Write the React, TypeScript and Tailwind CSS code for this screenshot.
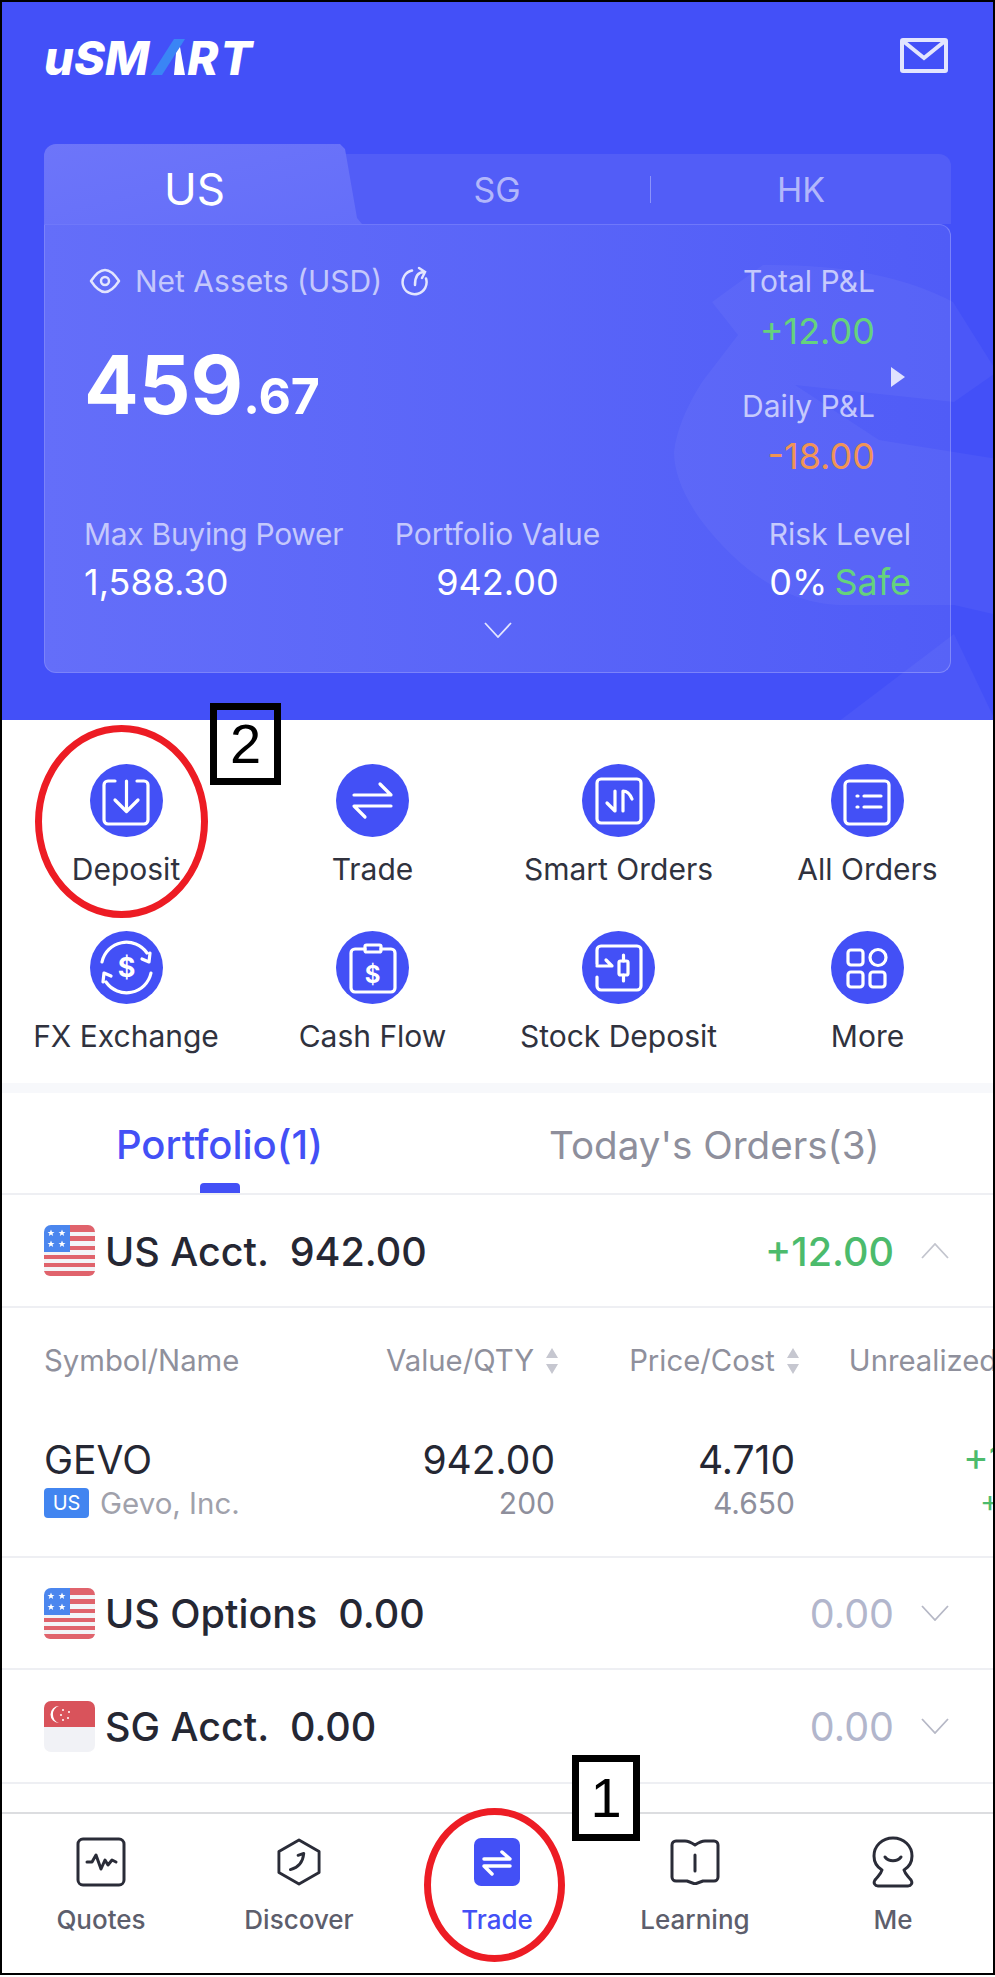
import type { ReactNode } from 'react';

const actions = [
  { label: 'Deposit', icon: <DepositIcon /> },
  { label: 'Trade', icon: <SwapIcon /> },
  { label: 'Smart Orders', icon: <SmartIcon /> },
  { label: 'All Orders', icon: <ListIcon /> },
  { label: 'FX Exchange', icon: <FxIcon /> },
  { label: 'Cash Flow', icon: <CashIcon /> },
  { label: 'Stock Deposit', icon: <StockIcon /> },
  { label: 'More', icon: <MoreIcon /> },
];

function Circle({ children }: { children: ReactNode }) {
  return (
    <svg viewBox="0 0 73 73" className="w-[73px] h-[73px]" fill="none" stroke="#fff" strokeWidth="3.200" strokeLinecap="round" strokeLinejoin="round">
      <circle cx="36.5" cy="36.5" r="36.5" fill="#4350f6" stroke="none" />
      {children}
    </svg>
  );
}

function DepositIcon() {
  return (
    <Circle>
      <path d="M25 17h-7a4 4 0 0 0-4 4v35a4 4 0 0 0 4 4h36a4 4 0 0 0 4-4V21a4 4 0 0 0-4-4h-7" />
      <path d="M36.5 17v30M25 36l11.500 11.500L48 36" />
    </Circle>
  );
}

function SwapIcon() {
  return (
    <Circle>
      <path d="M18 31h37L44 20M55 42H18l11 11" />
    </Circle>
  );
}

function SmartIcon() {
  return (
    <Circle>
      <rect x="15" y="15" width="44" height="44" rx="4" />
      <path d="M33 27v20l-8-8M41 47V27c4 0 7 3 9 8" />
    </Circle>
  );
}

function ListIcon() {
  return (
    <Circle>
      <rect x="14" y="17" width="44" height="43" rx="4" />
      <path d="M33 32h17M33 43h17M26 32h1M26 43h1" />
    </Circle>
  );
}

function FxIcon() {
  return (
    <Circle>
      <path d="M12 31a25 25 0 0 1 45-9M60 22l-1 9-7-3M61 42a25 25 0 0 1-45 9M13 51l1-9 7 3" />
      <text x="36.500" y="46" textAnchor="middle" fontSize="27" fontWeight="700" fill="#fff" stroke="none" fontFamily="Inter, sans-serif">$</text>
    </Circle>
  );
}

function CashIcon() {
  return (
    <Circle>
      <path d="M29 18h-10a4 4 0 0 0-4 4v35a4 4 0 0 0 4 4h36a4 4 0 0 0 4-4V22a4 4 0 0 0-4-4H45" />
      <rect x="29" y="14" width="16" height="7" rx="1.500" />
      <text x="36.500" y="52" textAnchor="middle" fontSize="24" fontWeight="700" fill="#fff" stroke="none" fontFamily="Inter, sans-serif">$</text>
    </Circle>
  );
}

function StockIcon() {
  return (
    <Circle>
      <path d="M15 33V19a4 4 0 0 1 4-4h36a4 4 0 0 1 4 4v36a4 4 0 0 1-4 4H19a4 4 0 0 1-4-4v-9" />
      <path d="M15 35h15l-6-6" />
      <rect x="37" y="30" width="9" height="14" rx="1.500" />
      <path d="M41.500 24v6M41.500 44v6" />
    </Circle>
  );
}

function MoreIcon() {
  return (
    <Circle>
      <rect x="17" y="19" width="15" height="15" rx="3" />
      <circle cx="47" cy="26.500" r="8" />
      <rect x="17" y="41" width="15" height="15" rx="3" />
      <rect x="39" y="41" width="15" height="15" rx="3" />
    </Circle>
  );
}

function Star({ x, y }: { x: number; y: number }) {
  return (
    <path
      transform={`translate(${x} ${y})`}
      d="M0-3.600 1 -1.100 3.500-1.100 1.500 .5 2.200 3 0 1.500-2.200 3-1.500 .5-3.500-1.100-1-1.100Z"
      fill="#fff"
    />
  );
}

function UsFlag() {
  return (
    <svg viewBox="0 0 51 51" className="w-[51px] h-[51px] shrink-0">
      <rect width="51" height="51" rx="7" fill="#f3f4f7" />
      <g fill="#e0636c">
        <path d="M26 0h18a7 7 0 0 1 7 7v0H26Z" />
        <rect x="26" y="11" width="25" height="5" />
        <rect x="26" y="21" width="25" height="4" />
        <rect y="30" width="51" height="4" />
        <rect y="38" width="51" height="4" />
        <path d="M0 46h51a7 7 0 0 1-7 5H7a7 7 0 0 1-7-5Z" />
      </g>
      <path d="M7 0h19v27H0V7a7 7 0 0 1 7-7Z" fill="#4b86ee" />
      <Star x={7} y={8} />
      <Star x={18} y={8} />
      <Star x={7} y={19} />
      <Star x={18} y={19} />
    </svg>
  );
}

function SgFlag() {
  return (
    <svg viewBox="0 0 51 51" className="w-[51px] h-[51px] shrink-0">
      <rect width="51" height="51" rx="7" fill="#f1f2f6" />
      <path d="M7 0h37a7 7 0 0 1 7 7v19H0V7a7 7 0 0 1 7-7Z" fill="#d9535b" />
      <path d="M15 5a9 9 0 0 0 0 17 8 8 0 0 1 0-17Z" fill="#fff" />
      <g fill="#fff">
        <circle cx="19" cy="9" r="1" />
        <circle cx="25" cy="11" r="1" />
        <circle cx="17" cy="14" r="1" />
        <circle cx="24" cy="17" r="1" />
        <circle cx="19" cy="19" r="1" />
      </g>
    </svg>
  );
}

function Chevron({ up, stroke }: { up?: boolean; stroke: string }) {
  return (
    <svg viewBox="0 0 28 16" className="w-[28px] h-[16px] shrink-0" fill="none" stroke={stroke} strokeWidth="1.800">
      <path d={up ? 'M1 15 14 1l13 14' : 'M1 1l13 14L27 1'} />
    </svg>
  );
}

function Sort() {
  return (
    <svg viewBox="0 0 12 26" className="w-[12px] h-[26px] ml-[12px] shrink-0" fill="#c6c7d0">
      <path d="M6 0l6 10H0ZM6 26l6-10H0Z" />
    </svg>
  );
}

function Account({ flag, name, total, pnl, open, line }: { flag: ReactNode; name: string; total: string; pnl: string; open?: boolean; line: string }) {
  return (
    <div className={`flex items-center shrink-0 pl-[42px] pr-[44px] border-b-2 border-[#eeeff3] ${line}`}>
      {flag}
      <span className="ml-[10px] mt-[4px] text-[39.5px] font-medium text-[#252733] whitespace-pre">{name}  {total}</span>
      <span className={`ml-auto mr-[27px] mt-[4px] text-[39.5px] ${open ? 'text-[#4cbb6c] font-medium' : 'text-[#b2b6cc]'}`}>{pnl}</span>
      <Chevron up={open} stroke={open ? '#c3c5ce' : '#b6b8c6'} />
    </div>
  );
}

const navIcon = { fill: 'none', stroke: '#2a2c38', strokeWidth: 3, strokeLinecap: 'round', strokeLinejoin: 'round' } as const;

function NavItem({ label, active, children }: { label: string; active?: boolean; children: ReactNode }) {
  return (
    <div className="w-[198px] flex flex-col items-center">
      <div className="h-[52px] flex items-center justify-center">{children}</div>
      <span className={`mt-[17px] text-[26px] font-medium leading-[30px] ${active ? 'text-[#4350f6]' : 'text-[#5d5e6c]'}`}>{label}</span>
    </div>
  );
}

export default function App() {
  return (
    <div className="relative w-[995px] h-[1977px] bg-white overflow-hidden font-['Inter',sans-serif]">
      <div className="h-[1975px] border-2 border-black flex flex-col overflow-hidden">
        {/* blue header */}
        <header className="relative h-[718px] shrink-0 bg-[#4350f8] overflow-hidden">
          <div className="flex items-start justify-between pl-[42px] pr-[45px] pt-[36px] h-[142px]">
            <div className="flex items-center h-[38px] text-white italic font-extrabold text-[47px] leading-none">
              <span>uSM</span>
              <svg viewBox="0 0 36 36" className="w-[36px] h-[36px] mx-[1px]">
                <path d="M1 36 24 0h11L12 36Z" fill="#3a85f5" />
                <path d="M26 14l4-6 5 28H24l2-22Z" fill="#fff" />
              </svg>
              <span className="tracking-[2px]">RT</span>
            </div>
            <svg viewBox="0 0 48 35" className="w-[48px] h-[35px]" fill="none" stroke="#e3e5fe" strokeWidth="4">
              <rect x="2" y="2" width="44" height="31" rx="1" />
              <path d="M3 3l21 17L45 3" />
            </svg>
          </div>

          <div className="relative ml-[42px] w-[907px]">
            <div className="relative flex h-[80px]">
              <div className="w-[318px] h-[80px] shrink-0 z-10 pt-[10px] rounded-tl-[12px] bg-gradient-to-br from-[#6d75f9] to-[#646ef9] [clip-path:polygon(0_0,296px_0,301px_5px,313px_74px,318px_80px,0_80px)] flex items-center justify-center pr-[17px]">
                <span className="text-[44px] text-white leading-none">US</span>
              </div>
              <div className="flex-1 mt-[10px] -ml-[20px] pl-[20px] rounded-tr-[12px] bg-[#525df7] flex items-center text-[34px] text-[#b2b7fb]">
                <span className="w-[288px] pr-[18px] text-center">SG</span>
                <span className="w-px h-[27px] bg-[#8c93fa]" />
                <span className="flex-1 text-center">HK</span>
              </div>
            </div>
            <div className="relative h-[449px] border border-[#7b83fa] border-t-[#6f78fa] rounded-b-[12px] rounded-tr-[12px] bg-gradient-to-r from-[#646ef9] to-[#505cf7] px-[39px]">
              <div className="flex justify-between pt-[36px] h-[289px] pr-[36px]">
                <div>
                  <div className="flex items-center h-[40px] text-[30px] text-[#c4c8fc]">
                    <svg viewBox="0 0 32 32" className="w-[32px] h-[32px] ml-[5px] mr-[14px]" fill="none" stroke="#e3e5fe" strokeWidth="2.500">
                      <path d="M2 16c4-6 9-11 14-11s10 5 14 11c-4 6-9 11-14 11S6 22 2 16Z" strokeLinejoin="round" />
                      <circle cx="16" cy="16" r="4" />
                    </svg>
                    <span className="whitespace-nowrap">Net Assets (USD)</span>
                    <svg viewBox="0 0 28 30" className="w-[28px] h-[30px] ml-[19px]" fill="none" stroke="#e3e5fe" strokeWidth="2.500" strokeLinecap="round">
                      <path d="M11 4.500a12 12 0 1 0 14 8" />
                      <path d="M18 2l6 4-3 6M23 6c-6 0-9 4-9 13" />
                    </svg>
                  </div>
                  <div className="mt-[42px] font-bold text-white leading-[84px]">
                    <span className="text-[81px]">459</span>
                    <span className="text-[50px]">.67</span>
                  </div>
                </div>
                <div className="relative flex flex-col items-end text-[30px] text-[#c4c8fc]">
                  <span className="leading-[40px]">Total P&amp;L</span>
                  <span className="mt-[10px] leading-[40px] text-[36px] text-[#5fd078]">+12.00</span>
                  <span className="mt-[35px] leading-[40px]">Daily P&amp;L</span>
                  <span className="mt-[10px] leading-[40px] text-[36px] text-[#f0904f]">-18.00</span>
                  <svg viewBox="0 0 14 20" className="absolute right-[-30px] top-[106px] w-[14px] h-[20px]" fill="#dfe1fe">
                    <path d="M0 0l14 10L0 20Z" />
                  </svg>
                </div>
              </div>
              <div className="grid grid-cols-3 text-[30px] text-[#c4c8fc] leading-[40px] whitespace-nowrap">
                <div className="tracking-[-0.3px]">Max Buying Power</div>
                <div className="text-center">Portfolio Value</div>
                <div className="text-right">Risk Level</div>
                <div className="mt-[8px] text-[36px] text-white">1,588.30</div>
                <div className="mt-[8px] text-[36px] text-white text-center">942.00</div>
                <div className="mt-[8px] text-[36px] text-white text-right">0%<span className="ml-[7px] text-[#5fd078]">Safe</span></div>
              </div>
              <div className="flex justify-center mt-[20px]">
                <Chevron stroke="#e3e5fe" />
              </div>
            </div>
          </div>

          {/* watermark */}
          <svg viewBox="0 0 995 720" className="absolute inset-0 w-[995px] h-[720px] pointer-events-none" fill="#fff" fillOpacity="0.045">
            <path d="M761 263Q880 262 951 300L995 370 952 400 793 383 877 438 995 457V613L952 603H837Q761 600 698 517 672 480 672 450 675 420 700 380L736 333 710 300Z" />
            <path d="M836 720 952 632l43 90Z" />
          </svg>
        </header>

        {/* shortcuts */}
        <section className="h-[373px] shrink-0 grid grid-cols-[248px_245px_247px_251px] grid-rows-[167px_167px] pt-[44px] border-b-[10px] border-[#f7f8fb]">
          {actions.map((a) => (
            <div key={a.label} className="flex flex-col items-center">
              <div className="h-[73px]">{a.icon}</div>
              <span className="mt-[14px] text-[30px] leading-[36px] text-[#30323e] whitespace-nowrap">{a.label}</span>
            </div>
          ))}
        </section>

        {/* tabs */}
        <div className="flex h-[102px] shrink-0 pl-[114px] border-b-2 border-[#eeeff3]">
          <div className="relative flex flex-col items-center w-[207px] shrink-0">
            <span className="mt-[24px] text-[40px] leading-[56px] text-[#4350f6] font-medium whitespace-nowrap">Portfolio(1)</span>
            <span className="absolute bottom-0 w-[40px] h-[10px] rounded-t-[4px] bg-[#4350f6]" />
          </div>
          <span className="ml-[226px] mt-[24px] text-[38.6px] leading-[56px] text-[#8e8f9c] whitespace-nowrap">Today's Orders(3)</span>
        </div>

        <Account flag={<UsFlag />} name="US Acct." total="942.00" pnl="+12.00" open line="h-[113px]" />

        {/* holdings table */}
        <div className="h-[250px] shrink-0 overflow-hidden border-b-2 border-[#eeeff3] text-[29.3px]">
          <div className="flex items-center h-[106px] pl-[42px] text-[#8f909c] whitespace-nowrap">
            <span className="w-[342px] shrink-0">Symbol/Name</span>
            <span className="flex items-center shrink-0">Value/QTY<Sort /></span>
            <span className="flex items-center ml-[71px] shrink-0">Price/Cost<Sort /></span>
            <span className="ml-[50px] shrink-0">Unrealized P&amp;L</span>
          </div>
          <div className="flex pl-[42px] whitespace-nowrap">
            <div className="w-[320px] shrink-0">
              <div className="text-[39px] leading-[44px] text-[#252733] mt-[24px]">GEVO</div>
              <div className="flex items-center mt-[6px]">
                <span className="w-[45px] h-[30px] rounded-[4px] bg-[#4285f0] text-white text-[20px] flex items-center justify-center">US</span>
                <span className="ml-[11px] text-[#a0a1ab] text-[29.5px] leading-[30px]">Gevo, Inc.</span>
              </div>
            </div>
            <div className="w-[191px] shrink-0 text-right">
              <div className="text-[39px] leading-[44px] text-[#252733] mt-[24px]">942.00</div>
              <div className="text-[#8e8f9c] text-[30px] mt-[6px] leading-[30px]">200</div>
            </div>
            <div className="w-[240px] shrink-0 text-right">
              <div className="text-[39px] leading-[44px] text-[#252733] mt-[24px]">4.710</div>
              <div className="text-[#8e8f9c] text-[30px] mt-[6px] leading-[30px]">4.650</div>
            </div>
            <div className="text-[#4cbb6c]">
              <div className="ml-[168px] text-[39px] leading-[44px] mt-[24px]">+12.00</div>
              <div className="ml-[185px] text-[30px] mt-[6px] leading-[30px]">+1.29%</div>
            </div>
          </div>
        </div>

        <Account flag={<UsFlag />} name="US Options" total="0.00" pnl="0.00" line="h-[112px]" />
        <Account flag={<SgFlag />} name="SG Acct." total="0.00" pnl="0.00" line="h-[114px]" />

        <div className="h-[28px] shrink-0" />

        {/* bottom nav */}
        <nav className="flex flex-1 pt-[22px] border-t-2 border-[#dcdde0]">
          <NavItem label="Quotes">
            <svg viewBox="0 0 50 50" className="w-[50px] h-[50px]" {...navIcon}>
              <rect x="2" y="2" width="46" height="46" rx="5" />
              <path d="M11 25h5l4-7 5 14 4-9 3 5 4-5 4 2" />
            </svg>
          </NavItem>
          <NavItem label="Discover">
            <svg viewBox="0 0 46 50" className="w-[44px] h-[50px]" {...navIcon}>
              <path d="M23 2 44 14v22L23 48 2 36V14Z" />
              <path d="M14 33c8-2 13-7 14-17l-6 2" />
            </svg>
          </NavItem>
          <NavItem label="Trade" active>
            <svg viewBox="0 0 46 48" className="w-[46px] h-[48px]">
              <rect width="46" height="48" rx="7" fill="#4350f6" />
              <path d="M10 21h26l-8-7M36 28H10l8 8" fill="none" stroke="#fff" strokeWidth="3.500" strokeLinecap="round" strokeLinejoin="round" />
            </svg>
          </NavItem>
          <NavItem label="Learning">
            <svg viewBox="0 0 50 46" className="w-[50px] h-[46px]" {...navIcon}>
              <path d="M25 6c-3-2-6-4-10-4H6a4 4 0 0 0-4 4v32a4 4 0 0 0 4 4h11l8 3 8-3h11a4 4 0 0 0 4-4V6a4 4 0 0 0-4-4h-9c-4 0-7 2-10 4Z" />
              <path d="M25 16v16" />
            </svg>
          </NavItem>
          <NavItem label="Me">
            <svg viewBox="0 0 42 52" className="w-[42px] h-[52px]" {...navIcon}>
              <path d="M21 2C10 2 2 10 2 20c0 6 3 11 8 14-1 4-4 6-7 10-2 3 0 6 3 6h30c3 0 5-3 3-6-3-4-6-6-7-10 5-3 8-8 8-14C40 10 32 2 21 2Z" />
              <path d="M13 21c4 5 12 5 16 0" />
            </svg>
          </NavItem>
        </nav>
      </div>

      {/* annotations laid over the screenshot */}
      <div className="absolute left-[35px] top-[725px] w-[173px] h-[193px] rounded-[50%] border-[7px] border-[#ed1c24]" />
      <div className="absolute left-[424px] top-[1808px] w-[141px] h-[154px] rounded-[50%] border-[7px] border-[#ed1c24]" />
      <div className="absolute left-[210px] top-[703px] w-[71px] h-[82px] border-[7px] border-black flex items-center justify-center font-['Liberation_Sans',sans-serif] text-[56px] text-black">2</div>
      <div className="absolute left-[572px] top-[1755px] w-[68px] h-[86px] border-[7px] border-black bg-white flex items-center justify-center font-['Liberation_Sans',sans-serif] text-[56px] text-black">1</div>
    </div>
  );
}
